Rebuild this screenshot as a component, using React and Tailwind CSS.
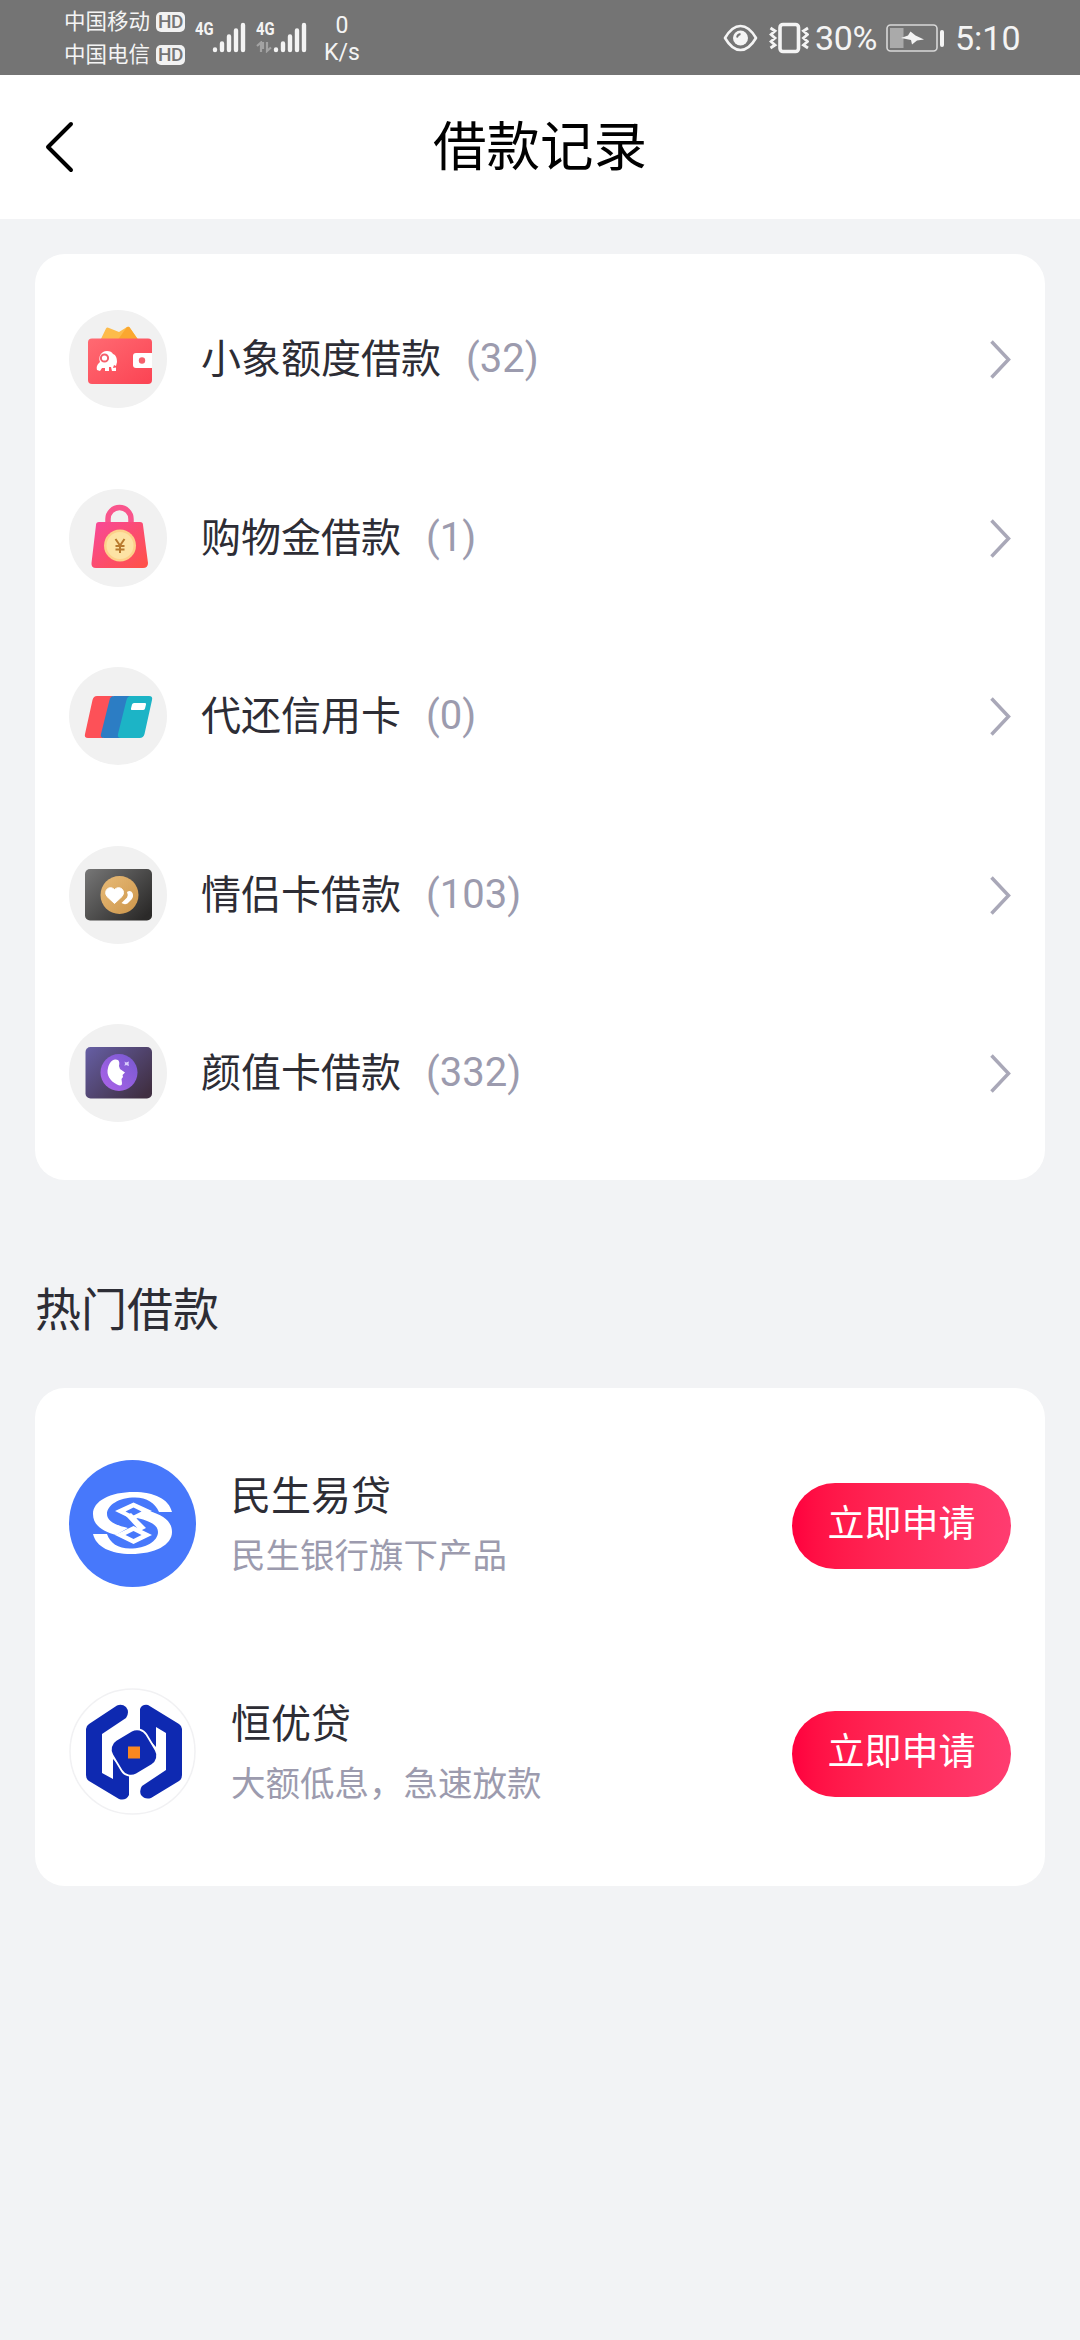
const records = [
  { name: '小象额度借款', count: 32, icon: WalletIcon },
  { name: '购物金借款', count: 1, icon: BagIcon },
  { name: '代还信用卡', count: 0, icon: CreditCardIcon },
  { name: '情侣卡借款', count: 103, icon: CoupleCardIcon },
  { name: '颜值卡借款', count: 332, icon: BeautyCardIcon },
];

const products = [
  { name: '民生易贷', description: '民生银行旗下产品', logo: MinshengLogo },
  { name: '恒优贷', description: '大额低息，急速放款', logo: HengyouLogo },
];

function WalletIcon() {
  return (
    <svg viewBox="0 0 98 98" className="size-[98px]">
      <defs>
        <linearGradient id="wallet" x1="0" y1="0" x2="1" y2="1">
          <stop offset="0" stopColor="#ff6a72" />
          <stop offset="1" stopColor="#fb4353" />
        </linearGradient>
      </defs>
      <path d="M31 31 37 18.5Q38 17 40 18L50 22 58 17Q60 16 61 18L70 31Z" fill="#fdbb4b" />
      <path d="M48 31 58 17Q60 16 61 18L70 31Z" fill="#fba72f" />
      <rect x="19" y="28.5" width="64" height="45.5" rx="4" fill="url(#wallet)" />
      <path d="M83 43H67q-3 0-3 3v9q0 3 3 3h16z" fill="#fff" />
      <circle cx="73" cy="50.5" r="3.2" fill="#f4606c" />
      <path
        d="M28 60c-1-4 1-6 3-8-2-5 1-11 7-11 3 0 5 1 6 3 3 1 4 4 4 8l-1 4-2-1-1 3 3-.5V61h-4l-1-4h-2v4h-4v-3h-3l-2 3z"
        fill="#fff"
      />
      <circle cx="35.5" cy="48" r="3.6" fill="none" stroke="#f4606c" strokeWidth="2" />
    </svg>
  );
}

function BagIcon() {
  return (
    <svg viewBox="0 0 98 98" className="size-[98px]">
      <defs>
        <linearGradient id="bag" x1="0" y1="0" x2="1" y2="1">
          <stop offset="0" stopColor="#f8489a" />
          <stop offset="1" stopColor="#ff5145" />
        </linearGradient>
      </defs>
      <path d="M39 36V30a11.5 11.5 0 0 1 23 0V36" fill="none" stroke="#f9558c" strokeWidth="5.5" />
      <path d="M30 33H71q3 0 3 3L79 74q0 5-5 5H27q-5 0-4.500-5L27 36q0-3 3-3z" fill="url(#bag)" />
      <circle cx="51" cy="56.5" r="16" fill="#fdd08a" />
      <circle cx="51" cy="56.5" r="13.5" fill="#fde3a4" />
      <path d="M46.5 50 51 56.5 55.5 50M51 56.5V64M46.5 57H55.5M46.5 60.5H55.5" fill="none" stroke="#b87a2d" strokeWidth="2" />
    </svg>
  );
}

function CreditCardIcon() {
  return (
    <svg viewBox="0 0 98 98" className="size-[98px]">
      <path d="M28 29H44L34 71H19q-4 0-3-4L23.5 33q1-4 4.500-4z" fill="#fd5158" />
      <path d="M45 29H62L52 71H35q-4 0-3-4L40.5 33q1-4 4.500-4z" fill="#2c7dc4" />
      <path d="M62 29H80q4 0 3 4L75.5 67q-1 4-5 4H52q-4 0-3-4L57.5 33q1-4 4.500-4z" fill="#1cb4c6" />
      <path d="M65 36H76q1.500 0 1 1.500l-1 4q-.5 1.500-2 1.500H63q-1.500 0-1-1.500l1-4q.5-1.500 2-1.500z" fill="#fff" />
    </svg>
  );
}

function CoupleCardIcon() {
  return (
    <svg viewBox="0 0 98 98" className="size-[98px]">
      <defs>
        <linearGradient id="couple" x1="0" y1="0" x2="1" y2=".8">
          <stop offset="0" stopColor="#777" />
          <stop offset="1" stopColor="#2b2a29" />
        </linearGradient>
        <linearGradient id="gold" x1="0" y1="0" x2="1" y2="1">
          <stop offset="0" stopColor="#e8bb78" />
          <stop offset="1" stopColor="#cc954a" />
        </linearGradient>
      </defs>
      <rect x="16" y="23" width="67" height="51.5" rx="5" fill="url(#couple)" />
      <circle cx="50.5" cy="49" r="19" fill="url(#gold)" />
      <path d="M58 46Q61.500 43.500 63.500 47 65 50.500 62.500 53.500L58.500 57.500Q55.500 59 52.500 57L58 51.500Q59.500 49 58 46Z" fill="#fff" />
      <path d="M45.5 57.5 38 50.5C34 45 40 38.5 45.5 43.5 51 38.5 57.5 45 53 50.5Z" fill="#fff" stroke="#fff" strokeLinejoin="round" />
    </svg>
  );
}

function BeautyCardIcon() {
  return (
    <svg viewBox="0 0 98 98" className="size-[98px]">
      <defs>
        <linearGradient id="beauty" x1="0" y1="0" x2="1" y2=".8">
          <stop offset="0" stopColor="#665fa5" />
          <stop offset="1" stopColor="#402f42" />
        </linearGradient>
        <linearGradient id="violet" x1="1" y1="0" x2="0" y2="1">
          <stop offset="0" stopColor="#7659d0" />
          <stop offset="1" stopColor="#ad64ea" />
        </linearGradient>
      </defs>
      <rect x="16.5" y="23" width="66.5" height="51.5" rx="5" fill="url(#beauty)" />
      <circle cx="50" cy="48.5" r="18.5" fill="url(#violet)" />
      <path d="M46 35.5C50 35 51 38 50 42L51 45 56 48.5 53.5 51 54 53 52.5 55 53 59C53 62 51 62 48 60.5 41 57 37 51 39 44 40 39 43 36 46 35.5Z" fill="#fff" />
      <path d="M55.5 37.5 57 38.5 60 37.5 59.5 39.5 60 42 57 41 55.5 42 56 39.5Z" fill="#d9cdfb" />
    </svg>
  );
}

function MinshengLogo() {
  return (
    <svg viewBox="0 0 127 127" className="size-[127px]">
      <circle cx="63.5" cy="63.5" r="63.5" fill="#4778fb" />
      <g fill="#fff">
        <path d="M103 52C100 39 85 32 65 32 41 32 24 41 24 54 24 65 33 71 47 75L59 68C46 65 38 61 38 54 38 45 50 37.5 66 37.5 78 37.5 86 43 90 52Z" />
        <path d="M24 74C27 87 42 94 62 94 86 94 103 85 103 72 103 61 94 55 80 51L68 58C81 61 89 65 89 72 89 81 77 88.5 61 88.5 49 88.5 41 83 38 74Z" />
        <path d="M57 56 62 53 77 68 71 71Z" />
        <path fillRule="evenodd" d="M64.5 42.5 83 51 64.5 60 46 51ZM64.5 47.5 56.5 51.5 64.5 55.5 72.5 51.5Z" />
        <path fillRule="evenodd" d="M64.5 66 83 75 64.5 84 46 75ZM64.5 71 56.5 75 64.5 79 72.5 75Z" />
      </g>
    </svg>
  );
}

function HengyouLogo() {
  return (
    <svg viewBox="0 0 127 127" className="size-[127px]">
      <circle cx="63.5" cy="63.5" r="62.5" fill="#fff" stroke="#f1f1f3" strokeWidth="1.5" />
      <g fill="#0e29b1">
        <path d="M48 17.5Q53 15.5 57 19 61 24 57 30L33 46V85L44 91V71L60 87V107Q57 113 50 111L20 93Q17 91 17 87V41Q17 38 20 36Z" />
        <path d="M79 17Q73 16 71 21V42L87 59V39L97 45V82L73 98Q70 102 72 107 76 112 82 110L110 93Q113 91 113 87V41Q113 38 110 36Z" />
        <rect x="-19" y="-19" width="38" height="38" rx="10" transform="translate(65 64.5) rotate(-31)" stroke="#fff" strokeWidth="3.5" paintOrder="stroke" />
      </g>
      <rect x="59" y="58.5" width="12" height="12" fill="#fa8720" />
    </svg>
  );
}

function Signal() {
  return (
    <svg viewBox="0 0 34 32" className="h-8 w-[34px]" stroke="#f4f4f4" strokeWidth="4.4" strokeLinecap="round">
      <path d="M3 28.5V29M10 22.5V29M17 15.5V29M24 9.5V29M31 4V29" />
    </svg>
  );
}

function Carrier({ name }) {
  return (
    <div className="flex h-[33px] items-center gap-[6px]">
      <span className="-mt-[3px] text-[21.5px] leading-none">{name}</span>
      <span className="flex h-5 w-[29px] items-center justify-center rounded-[5px] bg-[#f2f2f2] font-['Roboto'] text-[19px] font-medium leading-none tracking-[-0.5px] text-[#747474]">
        HD
      </span>
    </div>
  );
}

function NetworkLabel({ active }) {
  return (
    <div className="flex h-8 w-[17px] flex-col">
      <span className="origin-left scale-x-[0.78] font-['Roboto'] text-[19px] font-bold leading-[16px]">4G</span>
      {active && (
        <svg viewBox="0 0 16 12" className="mt-[4px] h-3 w-4" fill="none" stroke="#a3a3a3" strokeWidth="2.2">
          <path d="M1 5 5 1.5V11M7 1V8M11 1V10L15 6.5" />
        </svg>
      )}
    </div>
  );
}

function StatusBar() {
  return (
    <div className="flex h-[75px] items-start bg-[#747474] text-[#f4f4f4]">
      <div className="ml-[64px] mt-[5px] flex flex-col">
        <Carrier name="中国移动" />
        <Carrier name="中国电信" />
      </div>
      <div className="ml-[10px] mt-[21px] flex">
        <NetworkLabel />
        <Signal />
      </div>
      <div className="ml-[10px] mt-[21px] flex">
        <NetworkLabel active />
        <Signal />
      </div>
      <div className="ml-[17px] mt-[12px] flex w-[36px] flex-col items-center font-['Roboto'] text-[23px] leading-[27px]">
        <span>0</span>
        <span>K/s</span>
      </div>
      <div className="ml-auto mr-[60px] flex h-[75px] items-center font-['Roboto'] text-[34px]">
        <svg viewBox="0 0 35 28" className="h-7 w-[35px]" fill="none" stroke="#f4f4f4" strokeWidth="2.6">
          <path d="M2 14Q9 2 17.5 2T33 14Q26 26 17.5 26T2 14Z" strokeLinejoin="round" />
          <circle cx="17.5" cy="14" r="7.5" fill="#f4f4f4" stroke="none" />
          <path d="M14 13.5Q14.5 10.5 17.5 10" stroke="#747474" strokeWidth="1.8" />
        </svg>
        <svg viewBox="0 0 40 32" className="ml-[11px] h-8 w-10" fill="none" stroke="#f4f4f4">
          <rect x="11" y="2.5" width="18.5" height="27" rx="3" strokeWidth="3.6" />
          <path d="M1.5 6 6 9 2 12.5 6 16 2 19.5 6 23 1.5 26M39 6 34.5 9 38.5 12.5 34.5 16 38.5 19.5 34.5 23 39 26" strokeWidth="2.8" />
        </svg>
        <span className="ml-[6px] w-[62px] pt-[1px] tracking-[-0.4px]">30%</span>
        <svg viewBox="0 0 59 28" className="ml-[9px] h-7 w-[59px]">
          <rect x="1" y="1" width="50" height="26" rx="3.5" fill="none" stroke="#d8d8d8" strokeWidth="1.6" />
          <rect x="4" y="4" width="13.5" height="20" fill="#aaa" />
          <path d="M15 14 22 11.5 24.5 7.5 29.5 11.5 38 15.5 31 16.5 26 20.5 25 16Z" fill="#f4f4f4" />
          <rect x="54" y="6" width="4" height="17" rx="2" fill="#f4f4f4" />
        </svg>
        <span className="ml-[10px] w-[65px] pt-[1px]">5:10</span>
      </div>
    </div>
  );
}

function RecordRow({ record }) {
  const Icon = record.icon;

  return (
    <div className="flex h-[178.5px] items-center">
      <div className="size-[98px] rounded-full bg-[#f1f1f1]">
        <Icon />
      </div>
      <span className="-mt-[6px] ml-[34px] text-[40px] leading-[60px] text-[#2d2d35]">{record.name}</span>
      <span className="ml-[25px] font-['Roboto'] text-[40px] leading-[60px] text-[#9c9bae]">({record.count})</span>
      <svg viewBox="0 0 24 40" className="ml-auto h-10 w-6" fill="none" stroke="#a9a8b8" strokeWidth="3.5">
        <path d="M4.5 2.5 21.5 20.5 4.5 38.5" />
      </svg>
    </div>
  );
}

function ProductRow({ product }) {
  const Logo = product.logo;

  return (
    <div className="flex h-[228px] items-center">
      <Logo />
      <div className="ml-[35px]">
        <div className="text-[40px] leading-[60px] text-[#2d2d35]">{product.name}</div>
        <div className="text-[34.5px] leading-[60px] text-[#9c9bae]">{product.description}</div>
      </div>
      <button className="ml-auto mt-[6px] h-[86px] w-[219px] rounded-full bg-linear-to-r from-[#ff003e] to-[#ff3c70] pb-[9px] text-[37px] leading-none text-white">
        立即申请
      </button>
    </div>
  );
}

function App() {
  return (
    <div className="min-h-[2340px] w-[1080px] bg-[#f2f3f5] font-['Noto_Sans_CJK_SC',sans-serif]">
      <StatusBar />

      <header className="grid h-[144px] grid-cols-3 items-center bg-white">
        <svg viewBox="0 0 30 52" className="ml-[45px] h-[52px] w-[30px]" fill="none" stroke="#000" strokeWidth="4" strokeLinecap="round" strokeLinejoin="round">
          <path d="M26 3 3 26 26 49" />
        </svg>
        <h1 className="pb-[8px] text-center text-[53.5px] leading-none text-black">借款记录</h1>
      </header>

      <main className="px-[35px] pt-[35px]">
        <section className="h-[926px] rounded-[30px] bg-white px-[34px] pt-[16px]">
          {records.map((record) => (
            <RecordRow key={record.name} record={record} />
          ))}
        </section>

        <h2 className="mt-[91px] text-[46px] leading-[70px] text-[#2d2d35]">热门借款</h2>

        <section className="mt-[47px] h-[498px] rounded-[30px] bg-white px-[34px] pt-[21px]">
          {products.map((product) => (
            <ProductRow key={product.name} product={product} />
          ))}
        </section>
      </main>
    </div>
  );
}

export default App;
